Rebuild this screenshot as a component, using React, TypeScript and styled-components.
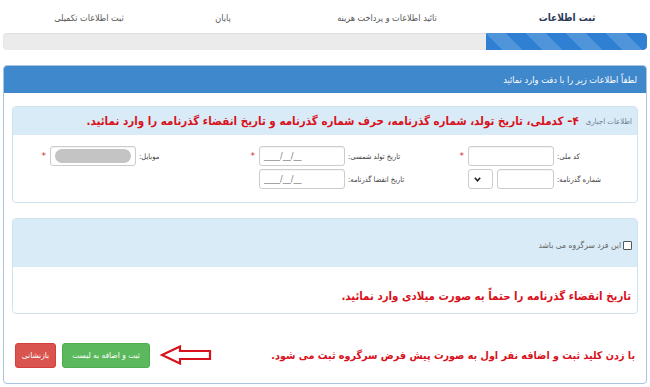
import React from "react";
import styled, { createGlobalStyle } from "styled-components";

const GlobalStyle = createGlobalStyle`
  html, body { margin: 0; padding: 0; background: #ffffff; }
  body { font-family: "DejaVu Sans", "Noto Sans", sans-serif; direction: rtl; color: #333; }
  * { box-sizing: border-box; }
`;

const condensed = `"DejaVu Sans Condensed", "DejaVu Sans", sans-serif`;

const Page = styled.div`
  width: 650px;
  height: 387px;
  padding: 0 3px;
  overflow: hidden;
`;

const Steps = styled.div`
  display: grid;
  grid-template-columns: 160px 200px 128px 140px;
  height: 33px;
  align-items: center;
  padding-top: 2px;
  font-family: ${condensed};
`;

const Step = styled.div<{ $active?: boolean }>`
  text-align: center;
  font-size: ${(p) => (p.$active ? "10px" : "9px")};
  font-weight: ${(p) => (p.$active ? "bold" : "normal")};
  color: ${(p) => (p.$active ? "#2b3a55" : "#555")};
`;

const Track = styled.div`
  height: 17px;
  background: #ebebeb;
  border-radius: 4px;
  overflow: hidden;
  display: flex;
  box-shadow: inset 0 1px 2px rgba(0, 0, 0, 0.06);
`;

const Fill = styled.div`
  width: 161px;
  height: 100%;
  border-radius: 0 4px 4px 0;
  background-color: #2f7fd3;
  background-image: linear-gradient(
    45deg,
    rgba(255, 255, 255, 0.16) 25%,
    transparent 25%,
    transparent 50%,
    rgba(255, 255, 255, 0.16) 50%,
    rgba(255, 255, 255, 0.16) 75%,
    transparent 75%,
    transparent
  );
  background-size: 40px 40px;
`;

const Panel = styled.div`
  margin-top: 15px;
  border: 1px solid #a9c4e0;
  border-radius: 4px;
  height: 319px;
  overflow: hidden;
`;

const PanelHeading = styled.div`
  background: #3f88cb;
  color: #fff;
  height: 27px;
  padding: 0 9px;
  display: flex;
  align-items: center;
  font-family: ${condensed};
  font-size: 9.2px;
`;

const PanelBody = styled.div`
  padding: 13px 8px 0 8px;
`;

const InfoBox = styled.div<{ $mt?: number }>`
  border: 1px solid #cfe3ee;
  border-radius: 4px;
  margin-top: ${(p) => p.$mt ?? 0}px;
  overflow: hidden;
`;

const InfoHeading = styled.div<{ $h: number }>`
  background: #d9ebf6;
  height: ${(p) => p.$h}px;
  display: flex;
  align-items: center;
  padding: 0 5px;
  gap: 7px;
`;

const SubTitle = styled.span`
  color: #6d8295;
  font-family: ${condensed};
  font-size: 7.8px;
  white-space: nowrap;
`;

const Alert = styled.span<{ $size: number }>`
  color: #d8121d;
  font-family: ${condensed};
  font-weight: bold;
  font-size: ${(p) => p.$size}px;
  white-space: nowrap;
`;

const FormArea = styled.div`
  padding: 11px 0 13px 0;
  display: flex;
  flex-direction: column;
  gap: 3px;
`;

const FormRow = styled.div`
  display: grid;
  grid-template-columns: repeat(3, 209px);
  padding-right: 5px;
`;

const Field = styled.div`
  display: flex;
  align-items: center;
  height: 20px;
`;

const Label = styled.label`
  width: 78px;
  text-align: left;
  font-family: ${condensed};
  font-size: 7.5px;
  color: #444;
  padding-left: 3px;
  white-space: nowrap;
`;

const InputBox = styled.div<{ $w?: number }>`
  width: ${(p) => p.$w ?? 86}px;
  height: 20px;
  border: 1px solid #ccc;
  border-radius: 3px;
  background: #fff;
  display: flex;
  align-items: center;
  padding: 0 4px;
  direction: ltr;
  font-size: 8px;
  color: #777;
  font-family: "DejaVu Sans", sans-serif;
  box-shadow: inset 0 1px 1px rgba(0, 0, 0, 0.05);
`;

const Blur = styled.div`
  flex: 1;
  height: 14px;
  border-radius: 7px;
  background: #c4c4c4;
`;

const Star = styled.span`
  color: #d0312d;
  font-size: 9px;
  margin-right: 4px;
  line-height: 1;
`;

const PassGroup = styled.div`
  display: flex;
  gap: 4px;
`;

const SelectBox = styled.div`
  width: 25px;
  height: 20px;
  border: 1px solid #ccc;
  border-radius: 3px;
  background: #fff;
  display: flex;
  align-items: center;
  justify-content: flex-start;
  padding-left: 5px;
  direction: ltr;
`;

const CheckRow = styled.label`
  display: flex;
  align-items: center;
  gap: 2px;
  font-family: ${condensed};
  font-size: 8.5px;
  color: #666;
  padding-top: 4px;
`;

const Check = styled.span`
  width: 9px;
  height: 9px;
  border: 1px solid #555;
  border-radius: 1px;
  background: #fff;
  display: inline-block;
`;

const NoteBody = styled.div`
  height: 46px;
  display: flex;
  align-items: flex-start;
  padding: 22px 6px 0 6px;
`;

const Footer = styled.div`
  display: flex;
  align-items: center;
  height: 28px;
  margin-top: 27px;
  padding: 0 3px;
`;

const Actions = styled.div`
  margin-right: auto;
  display: flex;
  align-items: center;
  gap: 6px;
`;

const Btn = styled.button<{ $tone: "green" | "red"; $w: number }>`
  width: ${(p) => p.$w}px;
  height: 25px;
  border: 1px solid ${(p) => (p.$tone === "green" ? "#4cae4c" : "#d43f3a")};
  background: ${(p) => (p.$tone === "green" ? "#5cb85c" : "#d9534f")};
  color: #fff;
  border-radius: 3px;
  font-family: ${condensed};
  font-size: 8.3px;
  padding: 0;
  direction: rtl;
`;

const ArrowWrap = styled.div`
  margin-left: 4px;
  display: flex;
`;

const DateBox = () => <InputBox>____/__/__</InputBox>;

export default function App() {
  return (
    <Page>
      <GlobalStyle />
      <Steps>
        <Step $active>ثبت اطلاعات</Step>
        <Step>تائید اطلاعات و پرداخت هزینه</Step>
        <Step>پایان</Step>
        <Step>ثبت اطلاعات تکمیلی</Step>
      </Steps>
      <Track>
        <Fill />
      </Track>
      <Panel>
        <PanelHeading>لطفاً اطلاعات زیر را با دقت وارد نمائید</PanelHeading>
        <PanelBody>
          <InfoBox>
            <InfoHeading $h={28}>
              <SubTitle>اطلاعات اجباری</SubTitle>
              <Alert $size={11.5}>
                ۴– کدملی، تاریخ تولد، شماره گذرنامه، حرف شماره گذرنامه و تاریخ انقضاء گذرنامه را وارد نمائید.
              </Alert>
            </InfoHeading>
            <FormArea>
              <FormRow>
                <Field>
                  <Label>کد ملی:</Label>
                  <InputBox />
                  <Star>*</Star>
                </Field>
                <Field>
                  <Label>تاریخ تولد شمسی:</Label>
                  <DateBox />
                  <Star>*</Star>
                </Field>
                <Field>
                  <Label>موبایل:</Label>
                  <InputBox>
                    <Blur />
                  </InputBox>
                  <Star>*</Star>
                </Field>
              </FormRow>
              <FormRow>
                <Field>
                  <Label>شماره گذرنامه:</Label>
                  <PassGroup>
                    <InputBox $w={57} />
                    <SelectBox>
                      <svg width="7" height="5" viewBox="0 0 7 5">
                        <path d="M0.8 0.8 L3.5 3.8 L6.2 0.8" fill="none" stroke="#222" strokeWidth="1.6" />
                      </svg>
                    </SelectBox>
                  </PassGroup>
                </Field>
                <Field>
                  <Label>تاریخ انقضا گذرنامه:</Label>
                  <DateBox />
                </Field>
              </FormRow>
            </FormArea>
          </InfoBox>

          <InfoBox $mt={15}>
            <InfoHeading $h={48}>
              <CheckRow>
                <Check />
                این فرد سرگروه می باشد
              </CheckRow>
            </InfoHeading>
            <NoteBody>
              <Alert $size={11.4}>تاریخ انقضاء گذرنامه را حتماً به صورت میلادی وارد نمائید.</Alert>
            </NoteBody>
          </InfoBox>

          <Footer>
            <Alert $size={10.7}>با زدن کلید ثبت و اضافه نفر اول به صورت پیش فرض سرگروه ثبت می شود.</Alert>
            <Actions>
              <ArrowWrap>
                <svg width="52" height="20" viewBox="0 0 52 20">
                  <path
                    d="M2 10 L20 1.5 L20 6 L50 6 L50 14 L20 14 L20 18.5 Z"
                    fill="none"
                    stroke="#d8121d"
                    strokeWidth="2.2"
                    strokeLinejoin="miter"
                  />
                </svg>
              </ArrowWrap>
              <Btn $tone="green" $w={88}>ثبت و اضافه به لیست</Btn>
              <Btn $tone="red" $w={41}>بازنشانی</Btn>
            </Actions>
          </Footer>
        </PanelBody>
      </Panel>
    </Page>
  );
}
